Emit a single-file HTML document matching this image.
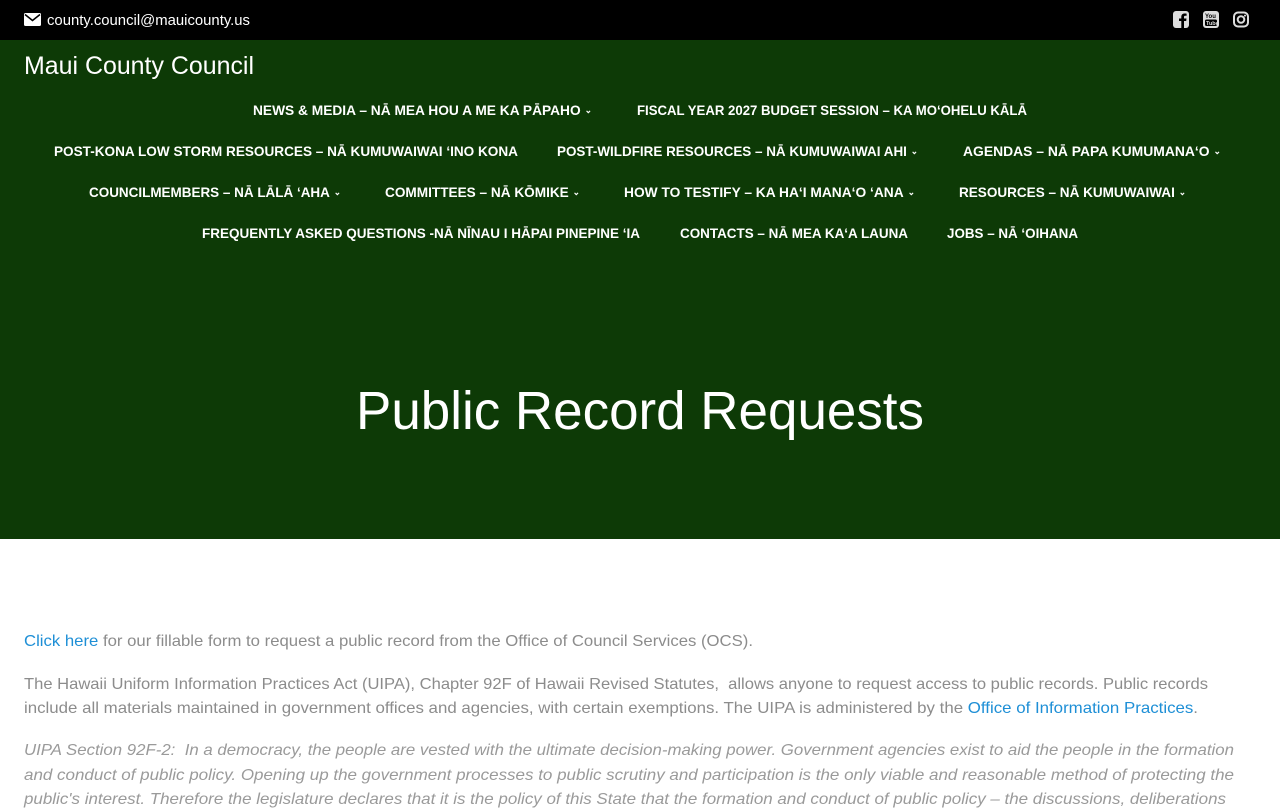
<!DOCTYPE html>
<html><head><meta charset="utf-8"><style>
*{margin:0;padding:0;box-sizing:border-box}
body{width:1280px;height:800px;overflow:hidden;background:#fff;font-family:"Liberation Sans",sans-serif;position:relative}
.top{position:absolute;left:0;top:0;width:1280px;height:40px;background:#000;color:#fff}
.green{position:absolute;left:0;top:40px;width:1280px;height:499px;background:#0d3a06}
.a{position:absolute;white-space:nowrap;transform-origin:0 50%;line-height:1}
.n{color:#fff;font-weight:bold;font-size:14px}
.n i{font-style:normal;font-size:9px;margin-left:4px;position:relative;top:-2px}
.p{font-size:16px;color:#8c8c8c}
.p a{color:#1e8fd6;text-decoration:none}
.it{font-style:italic;color:#9a9a9a}
</style></head><body>
<div class="top">
<svg style="position:absolute;left:24px;top:13px" width="17" height="13" viewBox="0 0 17 13"><rect x="0" y="0" width="17" height="13" rx="1.5" fill="#fff"/><path d="M1 1.5 L8.5 7.5 L16 1.5" stroke="#000" stroke-width="1.6" fill="none"/></svg>
<span class="a" data-w="203" style="left:47px;top:13px;font-size:15px;color:#fff">county.council@mauicounty.us</span>
<svg style="position:absolute;left:1173px;top:11px" width="16" height="17" viewBox="0 0 16 17"><rect x="0" y="0" width="16" height="17" rx="3" fill="#ddd"/><path d="M11 17V10h2.2l.3-2.5H11V6c0-.7.2-1.2 1.2-1.2h1.4V2.6c-.3 0-1-.1-2-.1-2 0-3.300 1.2-3.3 3.4v1.6H6V10h2.3v7z" fill="#000"/></svg>
<svg style="position:absolute;left:1203px;top:11px" width="16" height="17" viewBox="0 0 16 17"><rect x="0" y="0" width="16" height="17" rx="3" fill="#ddd"/><text x="2" y="7" font-size="6" font-weight="bold" fill="#000" font-family="Liberation Sans">You</text><rect x="2" y="8.5" width="12" height="6.5" rx="1.5" fill="#000"/><text x="3" y="14" font-size="5.5" font-weight="bold" fill="#ddd" font-family="Liberation Sans">Tube</text></svg>
<svg style="position:absolute;left:1233px;top:11px" width="16" height="17" viewBox="0 0 16 17"><rect x="1" y="1.5" width="14" height="14" rx="4" fill="none" stroke="#ddd" stroke-width="2"/><circle cx="8" cy="8.5" r="3.3" fill="none" stroke="#ddd" stroke-width="2"/><circle cx="12" cy="4.6" r="1" fill="#ddd"/></svg>
</div>
<div class="green"></div>
<span class="a" data-w="230" style="left:24px;top:54px;font-size:25px;color:#fff">Maui County Council</span>
<span class="a n" data-w="339" style="left:253px;top:103px">NEWS &amp; MEDIA – NĀ MEA HOU A ME KA PĀPAHO<i>⌄</i></span>
<span class="a n" data-w="390" style="left:637px;top:103px">FISCAL YEAR 2027 BUDGET SESSION – KA MOʻOHELU KĀLĀ</span>
<span class="a n" data-w="464" style="left:54px;top:144px">POST-KONA LOW STORM RESOURCES – NĀ KUMUWAIWAI ʻINO KONA</span>
<span class="a n" data-w="361" style="left:557px;top:144px">POST-WILDFIRE RESOURCES – NĀ KUMUWAIWAI AHI<i>⌄</i></span>
<span class="a n" data-w="258" style="left:963px;top:144px">AGENDAS – NĀ PAPA KUMUMANAʻO<i>⌄</i></span>
<span class="a n" data-w="252" style="left:89px;top:185px">COUNCILMEMBERS – NĀ LĀLĀ ʻAHA<i>⌄</i></span>
<span class="a n" data-w="195" style="left:385px;top:185px">COMMITTEES – NĀ KŌMIKE<i>⌄</i></span>
<span class="a n" data-w="291" style="left:624px;top:185px">HOW TO TESTIFY – KA HAʻI MANAʻO ʻANA<i>⌄</i></span>
<span class="a n" data-w="227" style="left:959px;top:185px">RESOURCES – NĀ KUMUWAIWAI<i>⌄</i></span>
<span class="a n" data-w="438" style="left:202px;top:226px">FREQUENTLY ASKED QUESTIONS -NĀ NĪNAU I HĀPAI PINEPINE ʻIA</span>
<span class="a n" data-w="228" style="left:680px;top:226px">CONTACTS – NĀ MEA KAʻA LAUNA</span>
<span class="a n" data-w="131" style="left:947px;top:226px">JOBS – NĀ ʻOIHANA</span>
<span class="a" data-w="568" style="left:356px;top:384px;font-size:54px;color:#fff">Public Record Requests</span>
<span class="a p" data-w="729" style="left:24px;top:634px"><a>Click here</a> for our fillable form to request a public record from the Office of Council Services (OCS).</span>
<span class="a p" data-w="1184" style="left:24px;top:677px">The Hawaii Uniform Information Practices Act (UIPA), Chapter 92F of Hawaii Revised Statutes,&nbsp; allows anyone to request access to public records. Public records</span>
<span class="a p" data-w="1174" style="left:24px;top:701px">include all materials maintained in government offices and agencies, with certain exemptions. The UIPA is administered by the <a>Office of Information Practices</a>.</span>
<span class="a p it" data-w="1210" style="left:24px;top:743px">UIPA Section 92F-2:&nbsp; In a democracy, the people are vested with the ultimate decision-making power. Government agencies exist to aid the people in the formation</span>
<span class="a p it" data-w="1210" style="left:24px;top:768px">and conduct of public policy. Opening up the government processes to public scrutiny and participation is the only viable and reasonable method of protecting the</span>
<span class="a p it" data-w="1202" style="left:24px;top:792px">public's interest. Therefore the legislature declares that it is the policy of this State that the formation and conduct of public policy – the discussions, deliberations</span>
<script>
document.querySelectorAll('[data-w]').forEach(function(e){var w=e.getBoundingClientRect().width;var t=+e.dataset.w;if(w>0)e.style.transform='scaleX('+(t/w)+')';});
</script>
</body></html>
